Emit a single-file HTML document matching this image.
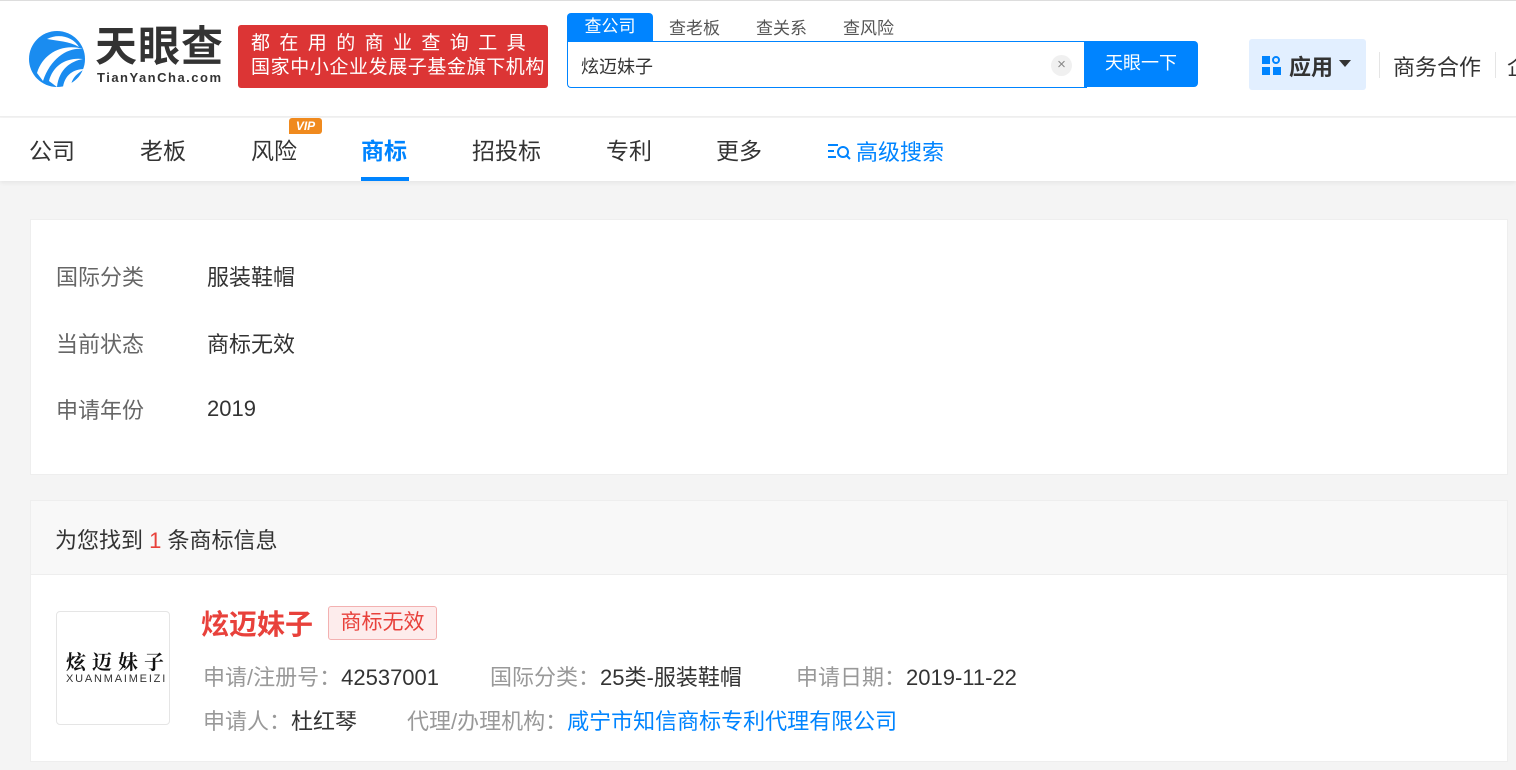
<!DOCTYPE html>
<html><head><meta charset="utf-8"><style>
*{margin:0;padding:0;box-sizing:border-box}
body{width:1516px;height:770px;overflow:hidden;background:#f4f4f4;font-family:"Liberation Sans","Noto Sans CJK SC",sans-serif;color:#333;position:relative}
.a{position:absolute;white-space:nowrap}
</style></head><body>
<div class="a" style="left:0;top:0;width:1516px;height:117px;background:#fff;border-top:1px solid #ddd;border-bottom:1px solid #eee"></div>
<svg class="a" style="left:29px;top:29px" width="56" height="60" viewBox="0 0 56 60"><circle cx="28" cy="30" r="28" fill="#1a8cf0"/><path d="M8 44 C14 24 34 14 54 20 C40 18 22 28 14 52Z M20 52 C24 36 38 28 54 30 C42 32 30 40 28 58Z M34 58 C36 46 44 40 56 40 C48 44 42 50 42 58Z" fill="#fff"/><path d="M18 10 C30 4 44 8 50 18 C40 12 28 12 18 10Z" fill="#fff"/></svg>
<div class="a" style="left:95px;top:25px;font-size:42px;font-weight:bold;color:#333;letter-spacing:1px;line-height:44px">天眼查</div>
<div class="a" style="left:97px;top:70px;font-size:13px;font-weight:bold;color:#333;letter-spacing:1.5px">TianYanCha.com</div>
<div class="a" style="left:238px;top:25px;width:310px;height:63px;background:#dc3535;border-radius:3px;color:#fff;font-size:19px;line-height:24px;padding:7px 0 0 13px"><div style="letter-spacing:9.4px">都在用的商业查询工具</div><div style="letter-spacing:0.6px">国家中小企业发展子基金旗下机构</div></div>
<div class="a" style="left:567px;top:13px;width:86px;height:29px;background:#0084ff;border-radius:4px 4px 0 0;color:#fff;font-size:17px;line-height:28px;text-align:center">查公司</div>
<div class="a" style="left:669px;top:14px;font-size:17px;color:#555">查老板</div>
<div class="a" style="left:756px;top:14px;font-size:17px;color:#555">查关系</div>
<div class="a" style="left:843px;top:14px;font-size:17px;color:#555">查风险</div>
<div class="a" style="left:567px;top:41px;width:520px;height:47px;border:1px solid #0084ff;border-right:none;border-radius:0 0 0 4px;background:#fff"></div>
<div class="a" style="left:581px;top:53px;font-size:18px;color:#333">炫迈妹子</div>
<div class="a" style="left:1051px;top:55px;width:21px;height:21px;border-radius:50%;background:#f0f0f0;color:#888;font-size:15px;line-height:20px;text-align:center">×</div>
<div class="a" style="left:1084px;top:41px;width:114px;height:46px;background:#0084ff;border-radius:0 4px 4px 0;color:#fff;font-size:18px;line-height:44px;text-align:center">天眼一下</div>
<div class="a" style="left:1249px;top:39px;width:117px;height:51px;background:#e2efff;border-radius:3px"></div>
<svg class="a" style="left:1262px;top:56px" width="19" height="19"><rect x="0" y="0" width="8" height="8" fill="#0084ff"/><circle cx="14" cy="4" r="3" fill="none" stroke="#0084ff" stroke-width="2"/><rect x="0" y="11" width="8" height="8" fill="#0084ff"/><rect x="11" y="11" width="8" height="8" fill="#0084ff"/></svg>
<div class="a" style="left:1289px;top:50px;font-size:22px;font-weight:bold;color:#333">应用</div>
<div class="a" style="left:1339px;top:60px;border:6px solid transparent;border-top:7px solid #333"></div>
<div class="a" style="left:1379px;top:52px;width:1px;height:26px;background:#e5e5e5"></div>
<div class="a" style="left:1393px;top:50px;font-size:22px;color:#333">商务合作</div>
<div class="a" style="left:1495px;top:52px;width:1px;height:26px;background:#e5e5e5"></div>
<div class="a" style="left:1507px;top:50px;font-size:22px;color:#333">企</div>
<div class="a" style="left:0;top:118px;width:1516px;height:63px;background:#fff;box-shadow:0 2px 4px rgba(0,0,0,.06)"></div>
<div class="a" style="left:29px;top:132px;font-size:23px;color:#333">公司</div>
<div class="a" style="left:140px;top:132px;font-size:23px;color:#333">老板</div>
<div class="a" style="left:251px;top:132px;font-size:23px;color:#333">风险</div>
<div class="a" style="left:289px;top:118px;width:33px;height:16px;background:#f08a1e;border-radius:3px 3px 3px 0;color:#fff;font-size:12px;font-style:italic;font-weight:bold;line-height:16px;text-align:center">VIP</div>
<div class="a" style="left:361px;top:132px;font-size:23px;color:#0084ff;font-weight:bold">商标</div>
<div class="a" style="left:361px;top:177px;width:48px;height:4px;background:#0084ff"></div>
<div class="a" style="left:472px;top:132px;font-size:23px;color:#333">招投标</div>
<div class="a" style="left:606px;top:132px;font-size:23px;color:#333">专利</div>
<div class="a" style="left:716px;top:132px;font-size:23px;color:#333">更多</div>
<svg class="a" style="left:827px;top:142px" width="24" height="18"><path d="M1 3h10M1 9h6M1 15h8" stroke="#0084ff" stroke-width="2"/><circle cx="16" cy="10" r="5" fill="none" stroke="#0084ff" stroke-width="2"/><path d="M19 13l4 4" stroke="#0084ff" stroke-width="2"/></svg>
<div class="a" style="left:856px;top:135px;font-size:22px;color:#0084ff">高级搜索</div>
<div class="a" style="left:30px;top:219px;width:1478px;height:256px;background:#fff;border:1px solid #eee"></div>
<div class="a" style="left:56px;top:260px;font-size:22px;color:#666">国际分类</div><div class="a" style="left:207px;top:260px;font-size:22px;color:#333">服装鞋帽</div>
<div class="a" style="left:56px;top:327px;font-size:22px;color:#666">当前状态</div><div class="a" style="left:207px;top:327px;font-size:22px;color:#333">商标无效</div>
<div class="a" style="left:56px;top:393px;font-size:22px;color:#666">申请年份</div><div class="a" style="left:207px;top:396px;font-size:22px;color:#333">2019</div>
<div class="a" style="left:30px;top:500px;width:1478px;height:262px;background:#fff;border:1px solid #eee"></div>
<div class="a" style="left:31px;top:501px;width:1476px;height:74px;background:#f8f8f8;border-bottom:1px solid #eee"></div>
<div class="a" style="left:55px;top:523px;font-size:22px;color:#333">为您找到 <span style="color:#e8413b">1</span> 条商标信息</div>
<div class="a" style="left:56px;top:611px;width:114px;height:114px;border:1px solid #e5e5e5;border-radius:4px;background:#fff"></div>
<div class="a" style="left:66px;top:646px;font-size:20px;font-weight:bold;color:#111;letter-spacing:6px;font-family:'Noto Serif CJK SC',serif">炫迈妹子</div>
<div class="a" style="left:66px;top:673px;font-size:11px;color:#333;letter-spacing:1.8px">XUANMAIMEIZI</div>
<div class="a" style="left:201px;top:603px;font-size:28px;font-weight:bold;color:#e8413b">炫迈妹子</div>
<div class="a" style="left:328px;top:606px;width:109px;height:34px;background:#fdecec;border:1px solid #f3b1b1;border-radius:3px;color:#e8413b;font-size:21px;line-height:32px;text-align:center">商标无效</div>
<div class="a" style="left:203px;top:660px;font-size:22px;color:#999">申请/注册号：<span style="color:#333">42537001</span></div>
<div class="a" style="left:490px;top:660px;font-size:22px;color:#999">国际分类：<span style="color:#333">25类-服装鞋帽</span></div>
<div class="a" style="left:796px;top:660px;font-size:22px;color:#999">申请日期：<span style="color:#333">2019-11-22</span></div>
<div class="a" style="left:203px;top:704px;font-size:22px;color:#999">申请人：<span style="color:#333">杜红琴</span></div>
<div class="a" style="left:407px;top:704px;font-size:22px;color:#999">代理/办理机构：<span style="color:#0084ff">咸宁市知信商标专利代理有限公司</span></div>
</body></html>
